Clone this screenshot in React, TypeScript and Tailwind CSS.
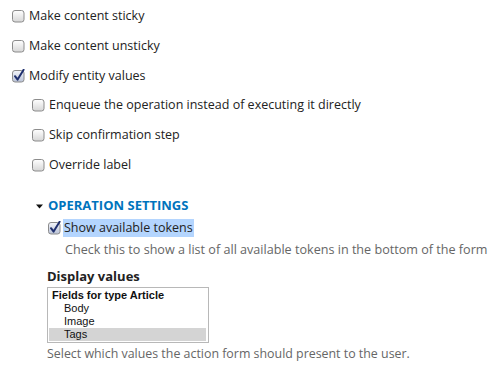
import React from "react";

const Checkbox = ({ checked = false }: { checked?: boolean }) => (
  <svg width="13" height="14" viewBox="0 0 13 14" className="shrink-0">
    <defs>
      <linearGradient id={checked ? "cbg-on" : "cbg-off"} x1="0" y1="0" x2="0" y2="1">
        <stop offset="0" stopColor={checked ? "#f4f6fb" : "#ffffff"} />
        <stop offset="1" stopColor={checked ? "#b9c2d6" : "#d6d6d6"} />
      </linearGradient>
    </defs>
    <rect
      x="0.5"
      y="1.5"
      width="11.5"
      height="11.5"
      rx="2.5"
      fill={`url(#${checked ? "cbg-on" : "cbg-off"})`}
      stroke="#8c8c8c"
    />
    {checked && (
      <path
        d="M3 7.2 L5.6 10.6 L11.6 0.8"
        fill="none"
        stroke="#1f2f6e"
        strokeWidth="2"
        strokeLinecap="round"
        strokeLinejoin="round"
      />
    )}
  </svg>
);

const CheckRow = ({
  label,
  checked = false,
}: {
  label: string;
  checked?: boolean;
}) => (
  <div className="flex h-[30px] items-center gap-[4px]">
    <Checkbox checked={checked} />
    <span className="text-[12.5px] text-[#222]">{label}</span>
  </div>
);

const options = ["Body", "Image", "Tags"];

export default function App() {
  return (
    <div className="h-[370px] w-[490px] overflow-hidden bg-white font-['Open_Sans',sans-serif] pl-[12px] pt-[1px]">
      <CheckRow label="Make content sticky" />
      <CheckRow label="Make content unsticky" />
      <CheckRow label="Modify entity values" checked />

      <div className="-mt-[1px] pl-[20px]">
        <CheckRow label="Enqueue the operation instead of executing it directly" />
        <CheckRow label="Skip confirmation step" />
        <CheckRow label="Override label" />
      </div>

      <div className="pl-[35px]">
        <div className="-ml-[11px] mt-[16px] flex h-[20px] items-center gap-[5px]">
          <svg width="7" height="5" viewBox="0 0 7 5" className="shrink-0">
            <path d="M0 0.5 L7 0.5 L3.5 4.5 Z" fill="#111" />
          </svg>
          <span className="text-[13px] font-bold uppercase text-[#0074bd]">
            Operation settings
          </span>
        </div>

        <div className="mt-[3px] flex h-[18px] items-center gap-[2px] pl-[1px]">
          <Checkbox checked />
          <span className="bg-[#b4d5fe] px-[1px] text-[12.5px] leading-[18px] text-[#222]">
            Show available tokens
          </span>
        </div>

        <p className="mt-[5px] h-[16px] pl-[18px] text-[12.6px] leading-[16px] whitespace-nowrap text-[#666]">
          Check this to show a list of all available tokens in the bottom of the form
        </p>

        <div className="mt-[9px] h-[18px] text-[13px] font-bold leading-[18px] text-[#222]">
          Display values
        </div>

        <div className="mt-[2px] h-[56px] w-[162px] border border-[#b8b8b8] pt-[1px] pr-[2px] pl-[1px] font-['Liberation_Sans',Arial,sans-serif] text-[11px] leading-[13px] text-[#111]">
          <div className="pl-[3px] font-bold">Fields for type Article</div>
          {options.map((o) => (
            <div
              key={o}
              className={`pl-[15px] ${o === "Tags" ? "bg-[#d4d4d4]" : ""}`}
            >
              {o}
            </div>
          ))}
        </div>

        <p className="mt-[3px] h-[16px] text-[12.4px] leading-[16px] whitespace-nowrap text-[#666]">
          Select which values the action form should present to the user.
        </p>
      </div>
    </div>
  );
}
